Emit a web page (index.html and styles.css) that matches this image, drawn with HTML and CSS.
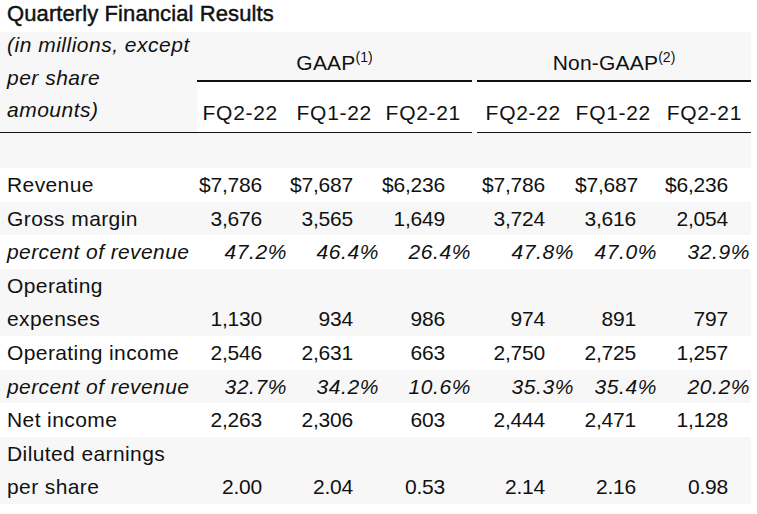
FILE: index.html
```html
<!DOCTYPE html>
<html lang="en">
<head>
<meta charset="utf-8">
<title>Quarterly Financial Results</title>
<link rel="stylesheet" href="styles.css">
</head>
<body>
<h1 class="title">Quarterly Financial Results</h1>
<table class="fin">
  <colgroup>
    <col class="c-label"><col class="c1"><col class="c2"><col class="c3"><col class="c-gap"><col class="c4"><col class="c5"><col class="c6">
  </colgroup>
  <thead>
    <tr class="h1">
      <th rowspan="2" class="unit"><div class="unit-text">(in millions, except<br>per share<br>amounts)</div></th>
      <th colspan="3" class="grp">GAAP<sup>(1)</sup></th>
      <th class="gap"></th>
      <th colspan="3" class="grp">Non-GAAP<sup>(2)</sup></th>
    </tr>
    <tr class="h2">
      <th class="q q1">FQ2-22</th>
      <th class="q q2">FQ1-22</th>
      <th class="q q3">FQ2-21</th>
      <th class="gap"></th>
      <th class="q q4">FQ2-22</th>
      <th class="q q5">FQ1-22</th>
      <th class="q q6">FQ2-21</th>
    </tr>
  </thead>
  <tbody>
    <tr class="spacer"><td colspan="8"></td></tr>
    <tr>
      <td class="lbl">Revenue</td>
      <td class="n">$7,786</td><td class="n">$7,687</td><td class="n">$6,236</td><td class="gap"></td>
      <td class="n">$7,786</td><td class="n">$7,687</td><td class="n">$6,236</td>
    </tr>
    <tr>
      <td class="lbl">Gross margin</td>
      <td class="n">3,676</td><td class="n">3,565</td><td class="n">1,649</td><td class="gap"></td>
      <td class="n">3,724</td><td class="n">3,616</td><td class="n">2,054</td>
    </tr>
    <tr class="pct">
      <td class="lbl">percent of revenue</td>
      <td class="n">47.2%</td><td class="n">46.4%</td><td class="n">26.4%</td><td class="gap"></td>
      <td class="n">47.8%</td><td class="n">47.0%</td><td class="n">32.9%</td>
    </tr>
    <tr>
      <td class="lbl">Operating<br>expenses</td>
      <td class="n">1,130</td><td class="n">934</td><td class="n">986</td><td class="gap"></td>
      <td class="n">974</td><td class="n">891</td><td class="n">797</td>
    </tr>
    <tr>
      <td class="lbl">Operating income</td>
      <td class="n">2,546</td><td class="n">2,631</td><td class="n">663</td><td class="gap"></td>
      <td class="n">2,750</td><td class="n">2,725</td><td class="n">1,257</td>
    </tr>
    <tr class="pct">
      <td class="lbl">percent of revenue</td>
      <td class="n">32.7%</td><td class="n">34.2%</td><td class="n">10.6%</td><td class="gap"></td>
      <td class="n">35.3%</td><td class="n">35.4%</td><td class="n">20.2%</td>
    </tr>
    <tr>
      <td class="lbl">Net income</td>
      <td class="n">2,263</td><td class="n">2,306</td><td class="n">603</td><td class="gap"></td>
      <td class="n">2,444</td><td class="n">2,471</td><td class="n">1,128</td>
    </tr>
    <tr>
      <td class="lbl">Diluted earnings<br>per share</td>
      <td class="n">2.00</td><td class="n">2.04</td><td class="n">0.53</td><td class="gap"></td>
      <td class="n">2.14</td><td class="n">2.16</td><td class="n">0.98</td>
    </tr>
  </tbody>
</table>
</body>
</html>
```

FILE: styles.css
```css
html, body {
  margin: 0;
  padding: 0;
  background: #ffffff;
}

body {
  font-family: "Liberation Sans", Arial, Helvetica, sans-serif;
  font-size: 21px;
  color: #111111;
}

.title {
  margin: 0;
  padding: 0 0 4px 7px;
  font-size: 22px;
  line-height: 28px;
  font-weight: normal;
  -webkit-text-stroke: 0.45px #111111;
  letter-spacing: 0.1px;
}

.fin {
  width: 751px;
  table-layout: fixed;
  border-collapse: separate;
  border-spacing: 0;
}

.c-label { width: 197px; }
.c1 { width: 91px; }
.c2 { width: 92px; }
.c3 { width: 92px; }
.c-gap { width: 5px; }
.c4 { width: 98px; }
.c5 { width: 83px; }
.c6 { width: 93px; }

.fin th,
.fin td {
  padding: 0;
  font-weight: normal;
  line-height: 33.6px;
  white-space: nowrap;
}

/* header */
.h1 th {
  background: #f7f7f7;
  height: 48px;
  vertical-align: bottom;
}

.fin .h1 .grp {
  border-bottom: 2px solid #111111;
  text-align: center;
  letter-spacing: 0.2px;
}

.grp sup {
  font-size: 14px;
  line-height: 0;
  vertical-align: 8px;
  letter-spacing: 0;
}

.fin .unit {
  height: auto;
  background: #f7f7f7;
  text-align: left;
  vertical-align: top;
  padding: 0 0 0 7px;
  font-style: italic;
  line-height: 32.5px;
  letter-spacing: 0.5px;
  border-bottom: 1px solid #111111;
}

.unit-text {
  margin-top: -3px;
}

.h2 th {
  background: #ffffff;
  height: 48px;
  vertical-align: bottom;
  padding-bottom: 2px;
  text-align: right;
  letter-spacing: 0.7px;
}

.h2 .q { border-bottom: 1px solid #111111; }
.h2 .q1 { padding-right: 10px; }
.h2 .q2 { padding-right: 8px; }
.h2 .q3 { padding-right: 11px; }
.h2 .q4 { padding-right: 14px; }
.h2 .q5 { padding-right: 7px; }
.h2 .q6 { padding-right: 9px; }

/* body */
.fin .spacer td {
  height: 35px;
}

.fin tbody tr:nth-child(odd) { background: #f7f7f7; }
.fin tbody tr:nth-child(even) { background: #ffffff; }

.fin td.lbl {
  padding-left: 7px;
  vertical-align: top;
  letter-spacing: 0.4px;
}

.pct td { font-style: italic; }

.fin td.n {
  text-align: right;
  vertical-align: bottom;
  letter-spacing: -0.2px;
}

.fin td.n:nth-child(2) { padding-right: 26px; }
.fin td.n:nth-child(3) { padding-right: 27px; }
.fin td.n:nth-child(4) { padding-right: 27px; }
.fin td.n:nth-child(6) { padding-right: 30px; }
.fin td.n:nth-child(7) { padding-right: 22px; }
.fin td.n:nth-child(8) { padding-right: 23px; }

.fin tr.pct td.n {
  padding-right: 1px;
  letter-spacing: 0.6px;
}
```
